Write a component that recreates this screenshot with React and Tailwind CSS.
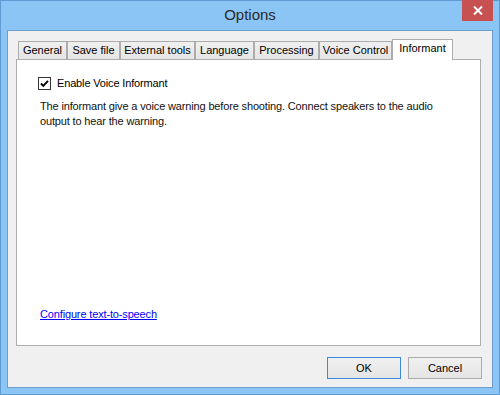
import React from 'react';

const tabs = [
  { label: 'General', w: 'w-[49px]' },
  { label: 'Save file', w: 'w-[53px]' },
  { label: 'External tools', w: 'w-[75px]' },
  { label: 'Language', w: 'w-[59px]' },
  { label: 'Processing', w: 'w-[65px]' },
  { label: 'Voice Control', w: 'w-[73px]' },
];

export default function App() {
  return (
    <div className="relative w-[500px] h-[395px] flex flex-col border border-[#5f9bd3] bg-[#8bc5f6] font-['Liberation_Sans',Arial,sans-serif] text-black select-none">
      {/* title bar */}
      <div className="h-[29px] flex items-center justify-center text-[15px] text-[#2a2a2a] pb-[1px]">
        Options
      </div>
      <button className="absolute top-[-1px] right-[6px] w-[31px] h-[21px] bg-[#c75050] flex items-center justify-center">
        <svg width="10" height="9" viewBox="0 0 10 9">
          <path d="M1 0.5 L9 8.5 M9 0.5 L1 8.5" stroke="#fff" strokeWidth="2" />
        </svg>
      </button>

      {/* client */}
      <div className="mx-[6px] mb-[6px] flex-1 border border-[#6c9fd0] bg-[#f0f0f0] flex flex-col pl-[8px] pr-[10px] pt-[8px]">
        {/* tabs */}
        <div className="h-[20px] flex items-end pl-[2px] text-[11px]">
          {tabs.map((t) => (
            <div
              key={t.label}
              className={`${t.w} h-[18px] border-t border-l border-r border-[#acacac] bg-gradient-to-b from-[#f0f0f0] to-[#e5e5e5] flex items-center justify-center leading-none`}
            >
              {t.label}
            </div>
          ))}
          <div className="relative z-10 w-[61px] h-[21px] -mb-[1px] border-t border-l border-r border-[#acacac] bg-white flex justify-center pt-[3px] leading-none">
            Informant
          </div>
        </div>

        {/* panel */}
        <div className="w-[465px] h-[287px] border border-[#adadad] bg-white flex flex-col pl-[21px] pt-[17px] pb-[24px] text-[11px] tracking-[-0.15px]">
          <div className="flex items-center h-[13px]">
            <div className="w-[13px] h-[13px] border border-[#333] bg-white flex items-center justify-center">
              <svg width="11" height="11" viewBox="0 0 11 11">
                <path d="M2 5.5 L4.3 7.8 L9 2.8" stroke="#000" strokeWidth="1.9" fill="none" />
              </svg>
            </div>
            <span className="ml-[6px] leading-none">Enable Voice Informant</span>
          </div>
          <p className="mt-[9px] ml-[2px] w-[420px] leading-[15px] text-[#111]">
            The informant give a voice warning before shooting. Connect speakers to the audio output to hear the warning.
          </p>
          <a className="mt-auto ml-[2px] text-[#0000ff] underline leading-[14px]" href="#">
            Configure text-to-speech
          </a>
        </div>

        {/* buttons */}
        <div className="mt-[11px] flex justify-end gap-[7px] text-[11px]">
          <button className="w-[74px] h-[22px] border border-[#3c8ae0] bg-gradient-to-b from-[#f0f0f0] to-[#e5e5e5] flex items-center justify-center">
            OK
          </button>
          <button className="w-[74px] h-[22px] border border-[#acacac] bg-gradient-to-b from-[#f0f0f0] to-[#e5e5e5] flex items-center justify-center">
            Cancel
          </button>
        </div>
      </div>
    </div>
  );
}
